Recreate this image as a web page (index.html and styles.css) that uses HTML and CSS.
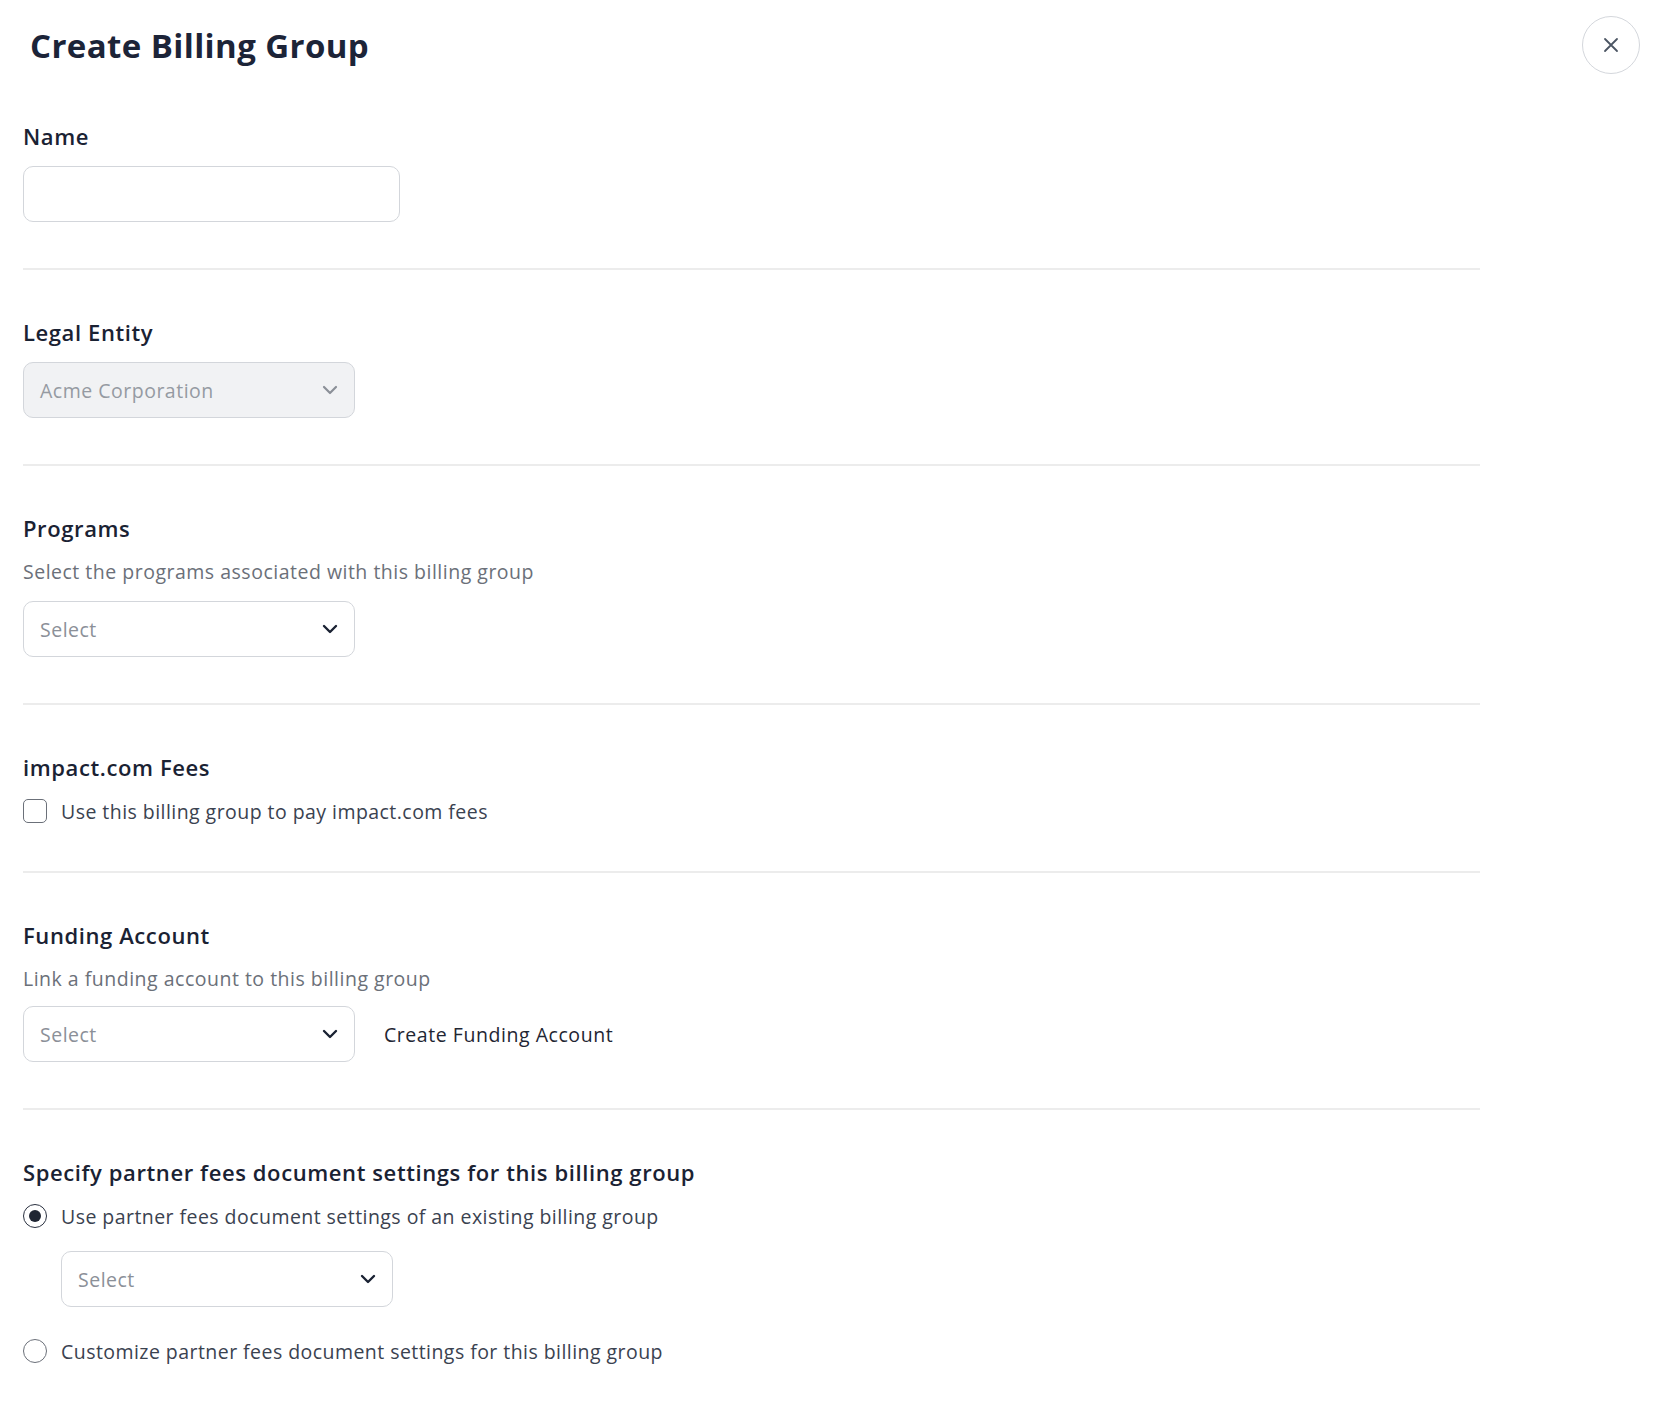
FILE: index.html
```html
<!DOCTYPE html>
<html lang="en">
<head>
<meta charset="utf-8">
<title>Create Billing Group</title>
<link rel="stylesheet" href="styles.css">
</head>
<body>
<div class="page">
  <header class="header">
    <h1 class="title">Create Billing Group</h1>
    <button class="close" type="button" aria-label="Close">
      <svg width="18" height="18" viewBox="0 0 18 18"><path d="M3 3 L15 15 M15 3 L3 15" stroke="#4b5563" stroke-width="1.8" stroke-linecap="round" fill="none"/></svg>
    </button>
  </header>
  <main class="form">
    <section class="section">
      <div class="label">Name</div>
      <div class="input"></div>
    </section>
    <section class="section">
      <div class="label">Legal Entity</div>
      <div class="select disabled">
        <span class="value">Acme Corporation</span>
        <svg class="chev" width="16" height="10" viewBox="0 0 16 10"><path d="M2 2 L8 8 L14 2" stroke="#8b9098" stroke-width="2.2" stroke-linecap="round" stroke-linejoin="round" fill="none"/></svg>
      </div>
    </section>
    <section class="section">
      <div class="label">Programs</div>
      <div class="desc">Select the programs associated with this billing group</div>
      <div class="select">
        <span class="value">Select</span>
        <svg class="chev" width="16" height="10" viewBox="0 0 16 10"><path d="M2 2 L8 8 L14 2" stroke="#1a2233" stroke-width="2.4" stroke-linecap="round" stroke-linejoin="round" fill="none"/></svg>
      </div>
    </section>
    <section class="section">
      <div class="label">impact.com Fees</div>
      <label class="option">
        <span class="checkbox"></span>
        <span class="option-text">Use this billing group to pay impact.com fees</span>
      </label>
    </section>
    <section class="section">
      <div class="label">Funding Account</div>
      <div class="desc desc-tight">Link a funding account to this billing group</div>
      <div class="row">
        <div class="select">
          <span class="value">Select</span>
          <svg class="chev" width="16" height="10" viewBox="0 0 16 10"><path d="M2 2 L8 8 L14 2" stroke="#1a2233" stroke-width="2.4" stroke-linecap="round" stroke-linejoin="round" fill="none"/></svg>
        </div>
        <span class="link">Create Funding Account</span>
      </div>
    </section>
    <section class="section last">
      <div class="label">Specify partner fees document settings for this billing group</div>
      <label class="option">
        <span class="radio checked"></span>
        <span class="option-text">Use partner fees document settings of an existing billing group</span>
      </label>
      <div class="nested">
        <div class="select">
          <span class="value">Select</span>
          <svg class="chev" width="16" height="10" viewBox="0 0 16 10"><path d="M2 2 L8 8 L14 2" stroke="#1a2233" stroke-width="2.4" stroke-linecap="round" stroke-linejoin="round" fill="none"/></svg>
        </div>
      </div>
      <label class="option option-second">
        <span class="radio"></span>
        <span class="option-text">Customize partner fees document settings for this billing group</span>
      </label>
    </section>
  </main>
</div>
</body>
</html>
```

FILE: styles.css
```css
* { box-sizing: border-box; }

html, body {
  margin: 0;
  padding: 0;
  background: #ffffff;
}

body {
  font-family: "Open Sans", "Lato", sans-serif;
  color: #1a2233;
}

.page {
  width: 1666px;
}

.header {
  display: flex;
  align-items: center;
  justify-content: space-between;
  padding: 16px 26px 0 30px;
  height: 74px;
}

.title {
  margin: 0;
  font-size: 33px;
  font-weight: 700;
  letter-spacing: 0.4px;
  color: #1c2438;
}

.close {
  width: 58px;
  height: 58px;
  border-radius: 50%;
  border: 1.5px solid #d4d7dc;
  background: #fff;
  display: flex;
  align-items: center;
  justify-content: center;
  padding: 0;
}

.form {
  padding-left: 23px;
  width: 1480px;
}

.section {
  padding: 48px 0 46px;
  border-bottom: 2px solid #ececec;
  display: flex;
  flex-direction: column;
  align-items: flex-start;
}

.section.last {
  border-bottom: none;
}

.label {
  font-size: 22px;
  line-height: 28px;
  font-weight: 600;
  letter-spacing: 0.6px;
  color: #1a2233;
  margin-bottom: 16px;
}

.desc {
  font-size: 19.5px;
  line-height: 28px;
  letter-spacing: 0.5px;
  color: #6b7079;
  margin-bottom: 15px;
}

.desc-tight {
  margin-bottom: 13px;
}

.input {
  width: 377px;
  height: 56px;
  border: 1.5px solid #d3d6db;
  border-radius: 10px;
  background: #fff;
}

.select {
  width: 332px;
  height: 56px;
  border: 1.5px solid #d3d6db;
  border-radius: 10px;
  background: #fff;
  display: flex;
  align-items: center;
  justify-content: space-between;
  padding: 0 16px 0 16px;
}

.select.disabled {
  background: #f1f2f4;
}

.value {
  font-size: 19.5px;
  letter-spacing: 0.5px;
  color: #8b9098;
}

.select.disabled .value {
  color: #959aa2;
}

.row {
  display: flex;
  align-items: center;
  gap: 29px;
}

.link {
  font-size: 19.5px;
  letter-spacing: 0.55px;
  color: #1f2633;
}

.option {
  display: flex;
  align-items: center;
  gap: 14px;
  height: 28px;
}

.option-text {
  font-size: 19.5px;
  letter-spacing: 0.45px;
  color: #3a4250;
}

.checkbox {
  width: 24px;
  height: 24px;
  border: 1.8px solid #6b7079;
  border-radius: 5px;
  background: #fff;
}

.radio {
  width: 24px;
  height: 24px;
  border: 1.8px solid #6b7079;
  border-radius: 50%;
  background: #fff;
  display: flex;
  align-items: center;
  justify-content: center;
}

.radio.checked {
  border-color: #2a3140;
}

.radio.checked::after {
  content: "";
  width: 12px;
  height: 12px;
  border-radius: 50%;
  background: #1f2633;
}

.nested {
  padding: 21px 0 0 38px;
}

.option-second {
  margin-top: 30px;
}
```
